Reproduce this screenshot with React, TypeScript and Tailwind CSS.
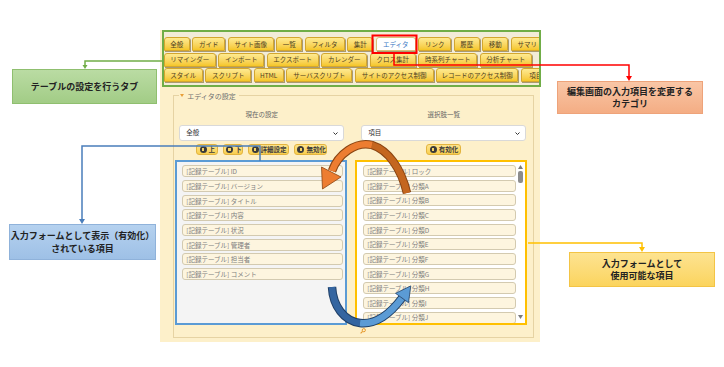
import React from "react";

type Tab = [string, string];

const tabRows: Tab[][] = [
  [
    ["全般", "w-[26px]"],
    ["ガイド", "w-[33px]"],
    ["サイト画像", "w-[46px]"],
    ["一覧", "w-[26px]"],
    ["フィルタ", "w-[40px]"],
    ["集計", "w-[26px]"],
    ["エディタ", "w-[40px]"],
    ["リンク", "w-[33px]"],
    ["履歴", "w-[26px]"],
    ["移動", "w-[26px]"],
    ["サマリ", "w-[33px]"],
  ],
  [
    ["リマインダー", "w-[52px]"],
    ["インポート", "w-[46px]"],
    ["エクスポート", "w-[52px]"],
    ["カレンダー", "w-[46px]"],
    ["クロス集計", "w-[46px]"],
    ["時系列チャート", "w-[59px]"],
    ["分析チャート", "w-[52px]"],
  ],
  [
    ["スタイル", "w-[39px]"],
    ["スクリプト", "w-[46px]"],
    ["HTML", "w-[30px]"],
    ["サーバスクリプト", "w-[66px]"],
    ["サイトのアクセス制御", "w-[79px]"],
    ["レコードのアクセス制御", "w-[82px]"],
    ["項目", "w-[30px]"],
  ],
];

const enabledItems = ["ID", "バージョン", "タイトル", "内容", "状況", "管理者", "担当者", "コメント"];
const availableItems = ["ロック", "分類A", "分類B", "分類C", "分類D", "分類E", "分類F", "分類G", "分類H", "分類I", "分類J"];

function TabItem({ label, w }: { label: string; w: string }) {
  const active = label === "エディタ";
  return (
    <div
      className={`${w} h-[14px] shrink-0 flex items-center justify-center rounded-t-[3px] border text-[6.5px] leading-none shadow-[1px_1px_0_#a89a72] ${
        active
          ? "bg-white border-[#d8c27a] text-[#3b78c4]"
          : "bg-linear-to-b from-[#feea90] to-[#f5c624] border-[#d3a62f] text-[#4d4020]"
      }`}
    >
      {label}
    </div>
  );
}

function Select({ value }: { value: string }) {
  return (
    <div className="mt-[7.7px] h-[16px] flex items-center justify-between rounded-[3px] border border-[#d9d9d9] bg-white pl-[6px] pr-[5px] text-[6.5px] text-[#333]">
      {value}
      <svg width="5" height="3" viewBox="0 0 5 3">
        <path d="M0.5 0.5L2.5 2.5L4.5 0.5" stroke="#333" fill="none" strokeWidth="1" />
      </svg>
    </div>
  );
}

function Btn({ label, w }: { label: string; w: string }) {
  return (
    <div className={`${w} h-[11.7px] flex items-center gap-[2px] pl-[2.5px] rounded-[3px] border border-[#e3b43f] bg-linear-to-b from-[#fde48c] to-[#f9cf4d] text-[6.5px] leading-none font-bold text-[#3d3d3d]`}>
      <span className="w-[7px] h-[7px] shrink-0 rounded-full bg-[#3a3a3a] flex items-center justify-center">
        <span className="w-[2.5px] h-[2.5px] bg-[#f5d364]" />
      </span>
      {label}
    </div>
  );
}

function Item({ name }: { name: string }) {
  return (
    <div className="h-[12px] shrink-0 flex items-center rounded-[3px] border border-[#d3cab0] bg-[#fdf5df] pl-[3px] text-[6.5px] leading-none text-[#808080] whitespace-nowrap">
      [記録テーブル] {name}
    </div>
  );
}

function Panel() {
  return (
    <div className="w-[380px] h-[312px] bg-[#fdf0ca]">
      {/* tabs */}
      <div className="ml-[1.7px] w-[379.3px] h-[56.5px] border-2 border-[#70ad47] bg-[#f2ecd8] overflow-hidden">
        <div className="flex flex-col gap-[1.5px] pt-[5px]">
          {tabRows.map((row, i) => (
            <div key={i} className="flex gap-[2.5px]">
              {row.map(([label, w]) => (
                <TabItem key={label} label={label} w={w} />
              ))}
            </div>
          ))}
        </div>
      </div>

      {/* editor settings */}
      <fieldset className="mt-[5px] ml-[12.7px] w-[361px] h-[246px] border border-[#e6d3a3] pl-[5.5px] pr-[6.5px]">
        <legend className="flex items-center gap-[3px] pl-[1px] pr-[3px] text-[7px] leading-[8px] text-[#707070]">
          <svg width="4" height="3" viewBox="0 0 4 3">
            <path d="M0 0H4L2 3Z" fill="#e8a03a" />
          </svg>
          エディタの設定
        </legend>
        <div className="grid grid-cols-[165px_165px] gap-x-[17px] pt-[10px]">
          {/* LEFT — current */}
          <div className="flex flex-col">
            <div className="h-[8px] text-center text-[6.5px] leading-[8px] text-[#666]">現在の設定</div>
            <Select value="全般" />
            <div className="mt-[2.6px] flex justify-center gap-[4.8px]">
              <Btn label="上" w="w-[21.7px]" />
              <Btn label="下" w="w-[20.7px]" />
              <Btn label="詳細設定" w="w-[41px]" />
              <Btn label="無効化" w="w-[33.4px]" />
            </div>
            <div className="mt-[4.5px] -ml-[4.3px] -mr-[2.7px] h-[165px] border-2 border-[#5b9bd5] bg-[#f4f4f4] pl-[5.3px] pr-[1.7px] pt-[3.5px] flex flex-col gap-[2.67px] overflow-hidden">
              {enabledItems.map((n) => (
                <Item key={n} name={n} />
              ))}
            </div>
          </div>

          {/* RIGHT — choices */}
          <div className="flex flex-col">
            <div className="h-[8px] text-center text-[6.5px] leading-[8px] text-[#666]">選択肢一覧</div>
            <Select value="項目" />
            <div className="mt-[2.6px] flex justify-center">
              <Btn label="有効化" w="w-[35px]" />
            </div>
            <div className="mt-[4.5px] -ml-[6px] -mr-[1px] h-[165px] border-2 border-[#ffc000] bg-white pl-[6px] flex overflow-hidden">
              <div className="flex-1 flex flex-col gap-[2.67px] pt-[3.2px] overflow-hidden">
                {availableItems.map((n) => (
                  <Item key={n} name={n} />
                ))}
              </div>
              <div className="w-[9px] flex flex-col items-center pt-[3px] pb-[4px]">
                <svg width="5" height="4" viewBox="0 0 5 4">
                  <path d="M2.5 0L5 4H0Z" fill="#7a7a7a" />
                </svg>
                <div className="mt-[2px] w-[4.5px] h-[12px] rounded-[2px] bg-[#8c8c8c]" />
                <div className="flex-1" />
                <svg width="5" height="4" viewBox="0 0 5 4">
                  <path d="M0 0H5L2.5 4Z" fill="#7a7a7a" />
                </svg>
              </div>
            </div>
            <div className="mt-[3px] -ml-[1px]">
              <svg width="6" height="6" viewBox="0 0 6 6">
                <circle cx="3.8" cy="2.2" r="1.6" fill="none" stroke="#e69a2e" strokeWidth="1" />
                <path d="M2.6 3.4L0.6 5.4" stroke="#e69a2e" strokeWidth="1.2" />
              </svg>
            </div>
          </div>
        </div>
      </fieldset>
    </div>
  );
}

function Callouts() {
  return (
    <>
      <div className="absolute left-[12px] top-[69px] w-[145px] h-[35px] flex items-center justify-center border border-[#8fbf6f] bg-linear-to-b from-[#badca3] to-[#a2cc86] text-[9px] font-bold text-[#222]">
        テーブルの設定を行うタブ
      </div>
      <div className="absolute left-[557px] top-[81px] w-[146px] h-[33px] flex flex-col items-center justify-center border border-[#eea37a] bg-linear-to-b from-[#f9c6a6] to-[#f4ad84] text-[9px] leading-[12px] font-bold text-[#222]">
        <span>編集画面の入力項目を変更する</span>
        <span>カテゴリ</span>
      </div>
      <div className="absolute left-[9px] top-[224px] w-[147px] h-[36px] flex flex-col items-center justify-center border border-[#8fb2da] bg-linear-to-b from-[#b5d1ef] to-[#9ec0e6] text-[9px] leading-[13px] font-bold text-[#222]">
        <span>入力フォームとして表示（有効化）</span>
        <span>されている項目</span>
      </div>
      <div className="absolute left-[569px] top-[252px] w-[146px] h-[35px] flex flex-col items-center justify-center border border-[#f3c445] bg-linear-to-b from-[#fde390] to-[#fbd45d] text-[9px] leading-[12px] font-bold text-[#222]">
        <span>入力フォームとして</span>
        <span>使用可能な項目</span>
      </div>
    </>
  );
}

function Connectors() {
  return (
    <svg className="absolute inset-0 pointer-events-none" width="724" height="367" viewBox="0 0 724 367">
      {/* green */}
      <polyline points="162,61 85,61 85,66" fill="none" stroke="#70ad47" strokeWidth="1.5" />
      <polygon points="82.5,65 87.5,65 85,69" fill="#70ad47" />
      {/* red */}
      <rect x="372.5" y="35.5" width="44" height="17.5" fill="none" stroke="#ff0000" strokeWidth="2" />
      <polyline points="394,53 394,65 629,65 629,77" fill="none" stroke="#ff0000" strokeWidth="1.5" />
      <polygon points="626,76 632,76 629,81" fill="#ff0000" />
      {/* blue */}
      <polyline points="260,161 260,146 82,146 82,220" fill="none" stroke="#4a7ebb" strokeWidth="1.5" />
      <polygon points="79,219 85,219 82,224" fill="#4a7ebb" />
      {/* gold */}
      <polyline points="528,243 642,243 642,248" fill="none" stroke="#ffc000" strokeWidth="1.5" />
      <polygon points="639,247 645,247 642,252" fill="#ffc000" />

      {/* orange curved arrow */}
      <path d="M407,193 C401,168 388,150 372,145 C356,141 338,154 332,171" fill="none" stroke="#8a4513" strokeWidth="8.5" />
      <path d="M407,193 C401,168 388,150 372,145" fill="none" stroke="#c4661f" strokeWidth="6.5" />
      <path d="M372,145 C356,141 338,154 332,171" fill="none" stroke="#ed7d31" strokeWidth="6.5" />
      <polygon points="341,177 321.5,167 322.5,189" fill="#ed7d31" stroke="#8a4513" strokeWidth="0.8" />

      {/* blue curved arrow */}
      <path d="M332,287 C333,306 344,321 360,323 C378,325 393,310 402,298" fill="none" stroke="#1f3f66" strokeWidth="8.5" />
      <path d="M332,287 C333,306 344,321 360,323" fill="none" stroke="#3465a0" strokeWidth="6.5" />
      <path d="M360,323 C378,325 393,310 402,298" fill="none" stroke="#5b9bd5" strokeWidth="6.5" />
      <polygon points="408.5,302.7 395.5,293.3 410.8,285.9" fill="#5b9bd5" stroke="#1f3f66" strokeWidth="0.8" />
    </svg>
  );
}

export default function App() {
  return (
    <div className="relative w-[724px] h-[367px] overflow-hidden bg-white font-['Noto_Sans_CJK_JP','Noto_Sans',sans-serif]">
      <div className="pt-[30px] pl-[160px]">
        <Panel />
      </div>
      <Callouts />
      <Connectors />
    </div>
  );
}
